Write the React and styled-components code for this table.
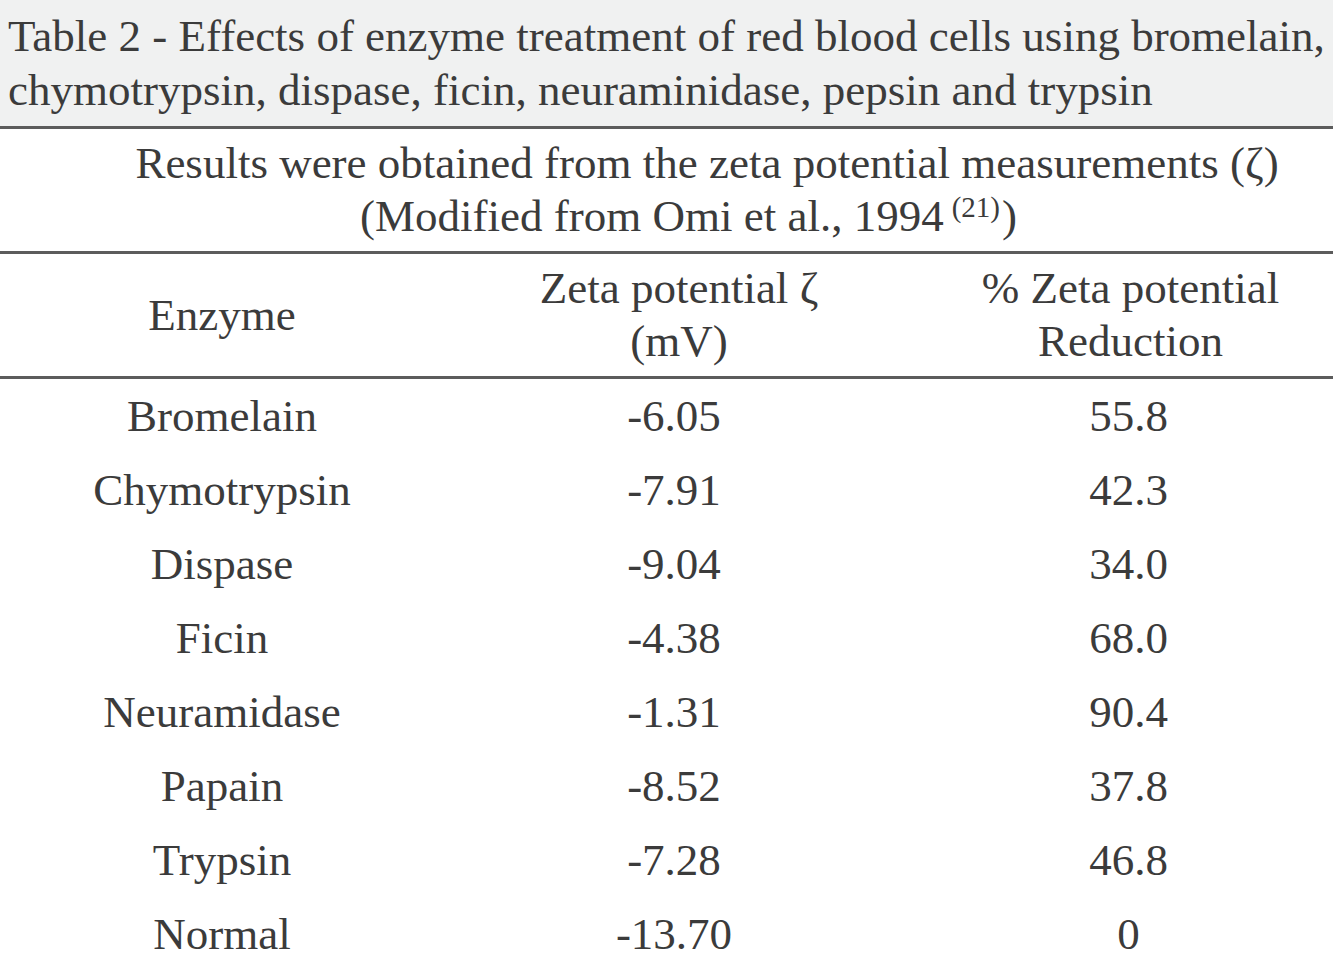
import React from 'react';
import styled, { createGlobalStyle } from 'styled-components';

const rows = [
  ['Bromelain', '-6.05', '55.8'],
  ['Chymotrypsin', '-7.91', '42.3'],
  ['Dispase', '-9.04', '34.0'],
  ['Ficin', '-4.38', '68.0'],
  ['Neuramidase', '-1.31', '90.4'],
  ['Papain', '-8.52', '37.8'],
  ['Trypsin', '-7.28', '46.8'],
  ['Normal', '-13.70', '0'],
];

const GlobalStyle = createGlobalStyle`
  html, body {
    margin: 0;
    padding: 0;
    background: #ffffff;
  }
  body {
    font-family: "Liberation Serif", "Times New Roman", serif;
    color: #3b3b3b;
  }
`;

// horizontal nudge for a centred cell: positive moves right, negative left
const nudge = (dx = 0) => `0 ${dx < 0 ? -dx : 0}px 0 ${dx > 0 ? dx : 0}px`;

const Wrapper = styled.div`
  width: 1333px;
  overflow: hidden;
`;

const Caption = styled.div`
  background: #f0f1f1;
  padding: 9px 0 9px 8px;
  font-size: 45px;
  line-height: 54px;
  border-bottom: 3px solid #5c5c5c;
  white-space: nowrap;
`;

const Note = styled.div`
  padding: 8px 0;
  border-bottom: 3px solid #5c5c5c;
`;

const NoteLine = styled.div`
  font-size: 45px;
  line-height: 53px;
  text-align: center;
  white-space: nowrap;
  padding: ${(p) => nudge(p.$dx)};
`;

const Sup = styled.sup`
  font-size: 29px;
  vertical-align: 14px;
  line-height: 0;
  margin: 0 2px 0 8px;
`;

const Grid = styled.div`
  display: grid;
  grid-template-columns: 444px 468px 1fr;
`;

const HeadRow = styled(Grid)`
  height: 122px;
  border-bottom: 3px solid #5c5c5c;
`;

const Row = styled(Grid)`
  height: 74px;
`;

const Cell = styled.div`
  display: flex;
  align-items: center;
  justify-content: center;
  text-align: center;
  font-size: 45px;
  line-height: 53px;
  white-space: nowrap;
  padding: ${(p) => nudge(p.$dx)};
`;

export default function App() {
  return (
    <Wrapper>
      <GlobalStyle />
      <Caption>
        Table 2 - Effects of enzyme treatment of red blood cells using bromelain,
        <br />
        chymotrypsin, dispase, ficin, neuraminidase, pepsin and trypsin
      </Caption>
      <Note>
        <NoteLine $dx={81}>
          Results were obtained from the zeta potential measurements (ζ)
        </NoteLine>
        <NoteLine $dx={44}>
          (Modified from Omi et al., 1994<Sup>(21)</Sup>)
        </NoteLine>
      </Note>
      <HeadRow>
        <Cell>Enzyme</Cell>
        <Cell $dx={2}>
          Zeta potential ζ
          <br />
          (mV)
        </Cell>
        <Cell $dx={16}>
          % Zeta potential
          <br />
          Reduction
        </Cell>
      </HeadRow>
      {rows.map(([name, zeta, pct]) => (
        <Row key={name}>
          <Cell>{name}</Cell>
          <Cell $dx={-8}>{zeta}</Cell>
          <Cell $dx={12}>{pct}</Cell>
        </Row>
      ))}
    </Wrapper>
  );
}
